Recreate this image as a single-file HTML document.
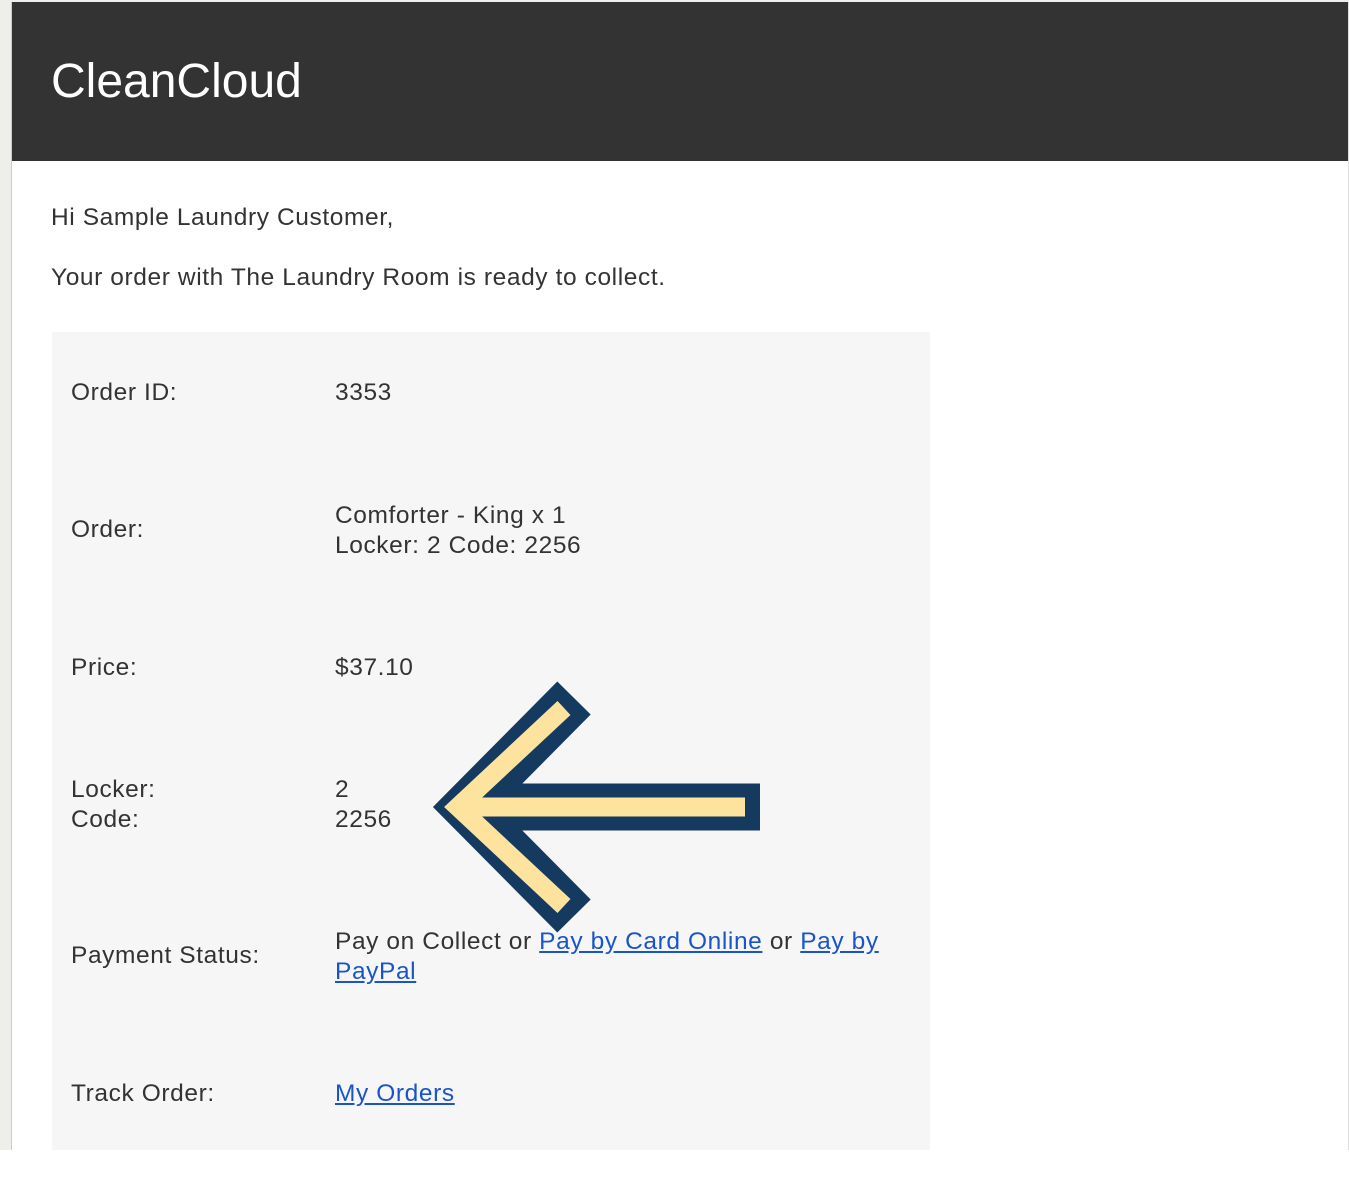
<!DOCTYPE html>
<html><head><meta charset="utf-8"><style>
html,body{margin:0;padding:0;width:1349px;height:1186px;background:#fff;overflow:hidden;position:relative;font-family:"Liberation Sans",Arial,sans-serif;color:#333;}
.t{position:absolute;font-size:24.5px;line-height:30px;white-space:nowrap;letter-spacing:0.6px;}
a{color:#1a55c8;text-decoration:underline;}
</style></head><body>
<div style="position:absolute;left:0;top:0;width:1349px;height:1150px;background:#eeeeea"></div>
<div style="position:absolute;left:11px;top:2px;width:1336px;height:1148px;background:#fff;border-left:1px solid #ccc;border-right:1px solid #ddd"></div>
<div style="position:absolute;left:12px;top:2px;width:1336px;height:159px;background:#333"></div>
<div class="t" style="left:51px;top:56px;font-size:48px;line-height:52px;letter-spacing:0;color:#fff">CleanCloud</div>
<div class="t" style="left:51px;top:203px">Hi Sample Laundry Customer,</div>
<div class="t" style="left:51px;top:263px">Your order with The Laundry Room is ready to collect.</div>
<div style="position:absolute;left:52px;top:332px;width:878px;height:818px;background:#f6f6f6"></div>
<div class="t" style="left:71px;top:378px">Order ID:</div>
<div class="t" style="left:335px;top:378px">3353</div>
<div class="t" style="left:71px;top:515px">Order:</div>
<div class="t" style="left:335px;top:501px">Comforter - King x 1<br>Locker: 2 Code: 2256</div>
<div class="t" style="left:71px;top:653px">Price:</div>
<div class="t" style="left:335px;top:653px">$37.10</div>
<div class="t" style="left:71px;top:775px">Locker:<br>Code:</div>
<div class="t" style="left:335px;top:775px">2<br>2256</div>
<div class="t" style="left:71px;top:941px">Payment Status:</div>
<div class="t" style="left:335px;top:927px">Pay on Collect or <a>Pay by Card Online</a> or <a>Pay by</a><br><a>PayPal</a></div>
<div class="t" style="left:71px;top:1079px">Track Order:</div>
<div class="t" style="left:335px;top:1079px"><a>My Orders</a></div>
<svg style="position:absolute;left:0;top:0" width="1349" height="1186">
<path d="M574,698 L466,807 L574,916 M466,807 L760,807" fill="none" stroke="#153a5f" stroke-width="47" stroke-linejoin="miter" stroke-miterlimit="10"/>
<path d="M564,708 L458,807 L564,906 M470,807 L745,807" fill="none" stroke="#fde39e" stroke-width="19" stroke-linejoin="miter" stroke-miterlimit="10"/>
</svg>
</body></html>
